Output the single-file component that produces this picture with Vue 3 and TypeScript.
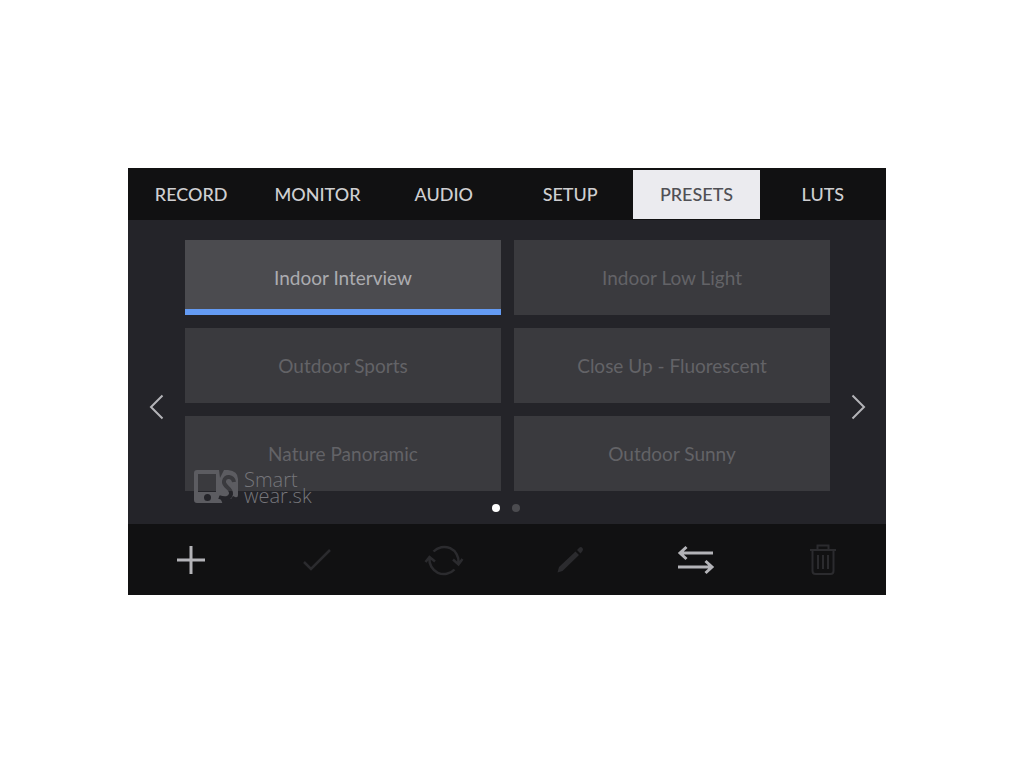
<script setup lang="ts">
import { ref } from 'vue'

const tabs: string[] = ['Record', 'Monitor', 'Audio', 'Setup', 'Presets', 'LUTs']
const presets: string[] = [
  'Indoor Interview',
  'Indoor Low Light',
  'Outdoor Sports',
  'Close Up - Fluorescent',
  'Nature Panoramic',
  'Outdoor Sunny',
]
const activeTab = ref('Presets')
const activePreset = ref('Indoor Interview')
const page = ref(0)
</script>

<template>
  <main class="page">
    <section class="panel">
      <nav class="tabs">
        <button
          v-for="tab in tabs"
          :key="tab"
          type="button"
          class="tab"
          :class="{ active: tab === activeTab }"
          @click="activeTab = tab"
        >{{ tab.toUpperCase() }}</button>
      </nav>

      <div class="body">
        <button type="button" class="arrow" aria-label="Previous page" @click="page = 0">
          <svg width="18" height="28" viewBox="0 0 18 28"><path d="M14.500 2.500 3 14l11.500 11.500" /></svg>
        </button>
        <div class="content">
          <div class="grid">
            <button
              v-for="preset in presets"
              :key="preset"
              type="button"
              class="card"
              :class="{ selected: preset === activePreset }"
              @click="activePreset = preset"
            >{{ preset }}</button>
          </div>
          <div class="dots">
            <button
              v-for="n in 2"
              :key="n"
              type="button"
              class="dot"
              :class="{ on: page === n - 1 }"
              :aria-label="`Page ${n}`"
              @click="page = n - 1"
            ></button>
          </div>
        </div>
        <button type="button" class="arrow" aria-label="Next page" @click="page = 1">
          <svg width="18" height="28" viewBox="0 0 18 28"><path d="M3.500 2.500 15 14 3.500 25.500" /></svg>
        </button>
        <div class="watermark">
          <svg width="46" height="34" viewBox="0 0 46 34">
            <mask id="s-cut">
              <rect width="46" height="34" fill="#fff" />
              <path d="M40 12C39 6 31 5 30 11C29 17 38 18 37 24C36 29 30 29 25 27" fill="none" stroke="#000" stroke-width="4" />
              <path d="M30 0 26 8 25 0ZM25 26 30 29 33 34H29Z" fill="#000" />
            </mask>
            <path mask="url(#s-cut)" fill-rule="evenodd" d="M3 0H34Q44 1 44 9V25Q44 28 41 27L39 26 37 29 34 27 31 30 28 33H3Q0 33 0 30V3Q0 0 3 0ZM4 4V22H22V4ZM13.500 24A3.500 3.500 0 1 0 13.500 31A3.500 3.500 0 1 0 13.500 24Z" />
          </svg>
          <span class="brand">Smart<br />wear.sk</span>
        </div>
      </div>

      <footer class="tools">
        <button type="button" class="tool bright" aria-label="Add preset">
          <svg width="40" height="40" viewBox="0 0 40 40"><path d="M6 20H34M20 6V34" stroke-width="3" /></svg>
        </button>
        <button type="button" class="tool" aria-label="Apply preset" disabled>
          <svg width="40" height="40" viewBox="0 0 40 40"><path d="M7 22 14 29 33 10" stroke-width="2.500" /></svg>
        </button>
        <button type="button" class="tool" aria-label="Update preset" disabled>
          <svg width="40" height="40" viewBox="0 0 40 40">
            <path d="M9.500 11.500A14.500 14.500 0 0 1 34.500 23M30.500 29.500A14.500 14.500 0 0 1 5.500 18M1.500 22 5.500 17 11 21.500M29 19.500 34.500 24.500 38.500 19" stroke-width="2.500" />
          </svg>
        </button>
        <button type="button" class="tool" aria-label="Edit preset" disabled>
          <svg width="40" height="40" viewBox="0 0 40 40">
            <path class="solid" d="M7.500 32.500 9 27 25.500 11.500 29 15 12.500 31ZM27 10 29.500 7.500Q31 6.500 32.500 8Q33.500 9.500 32.500 11L30.500 13.500Z" />
          </svg>
        </button>
        <button type="button" class="tool bright" aria-label="Import and export">
          <svg width="40" height="40" viewBox="0 0 40 40">
            <path d="M37 13H4M10.500 7 4 13 10.500 19M2 27H36M29.500 21 36 27 29.500 33" stroke-width="3" />
          </svg>
        </button>
        <button type="button" class="tool" aria-label="Delete preset" disabled>
          <svg width="40" height="40" viewBox="0 0 40 40">
            <path d="M7 10H33M14.500 9V5.500H25.500V9M9.500 11V31Q9.500 34 12.500 34H27.500Q30.500 34 30.500 31V11M15 15V29M20 15V29M25 15V29" stroke-width="2" />
          </svg>
        </button>
      </footer>
    </section>
  </main>
</template>

<style>
body {
  margin: 0;
  background: #fff;
}
</style>

<style scoped>
.page {
  padding: 168px 138px 0 128px;
  font-family: Lato, "Open Sans", sans-serif;
}
button {
  margin: 0;
  padding: 0;
  border: 0;
  background: none;
  font-family: inherit;
  cursor: pointer;
}
svg {
  display: block;
  fill: none;
  stroke: currentColor;
}
.panel {
  background: #111112;
}
.tabs {
  display: grid;
  grid-template-columns: repeat(6, 1fr);
  padding: 2px 0 1px;
}
.tab {
  height: 49px;
  padding-bottom: 2px;
  color: #cfcfd1;
  font-size: 18px;
  font-weight: 500;
  line-height: 24px;
}
.tab.active {
  background: #ebebef;
  color: #505055;
}
.body {
  position: relative;
  display: grid;
  grid-template-columns: 57px 1fr 56px;
  background: #242429;
}
.arrow {
  display: flex;
  align-items: center;
  justify-content: center;
  padding-top: 70px;
  color: #b4b4b8;
}
.arrow svg {
  stroke-width: 2;
}
.content {
  padding-top: 20px;
}
.grid {
  display: grid;
  grid-template-columns: 1fr 1fr;
  gap: 13px;
}
.card {
  height: 75px;
  background: #3a3a3e;
  color: #636367;
  font-size: 19px;
  line-height: 24px;
}
.card.selected {
  background: #4b4b4f;
  color: #abacb0;
  box-shadow: inset 0 -6px #649bf3;
}
.dots {
  display: flex;
  justify-content: center;
  gap: 12px;
  padding: 13px 4px 12px 0;
}
.dot {
  width: 8px;
  height: 8px;
  border-radius: 50%;
  background: #4b4b4f;
}
.dot.on {
  background: #fff;
}
.watermark {
  position: absolute;
  left: 66px;
  bottom: 20px;
  display: flex;
  gap: 4px;
  color: #5c5c61;
  pointer-events: none;
}
.watermark svg {
  fill: currentColor;
  stroke: none;
}
.brand {
  padding-top: 2px;
  color: #76767b;
  font-family: "Open Sans", sans-serif;
  font-weight: 300;
  font-size: 20px;
  line-height: 16px;
}
.tools {
  display: grid;
  grid-template-columns: repeat(6, 1fr);
}
.tool {
  display: flex;
  align-items: center;
  justify-content: center;
  height: 71px;
  color: #2b2b2e;
}
.tool.bright {
  color: #b4b4b8;
}
.solid {
  fill: currentColor;
  stroke: none;
}
</style>
